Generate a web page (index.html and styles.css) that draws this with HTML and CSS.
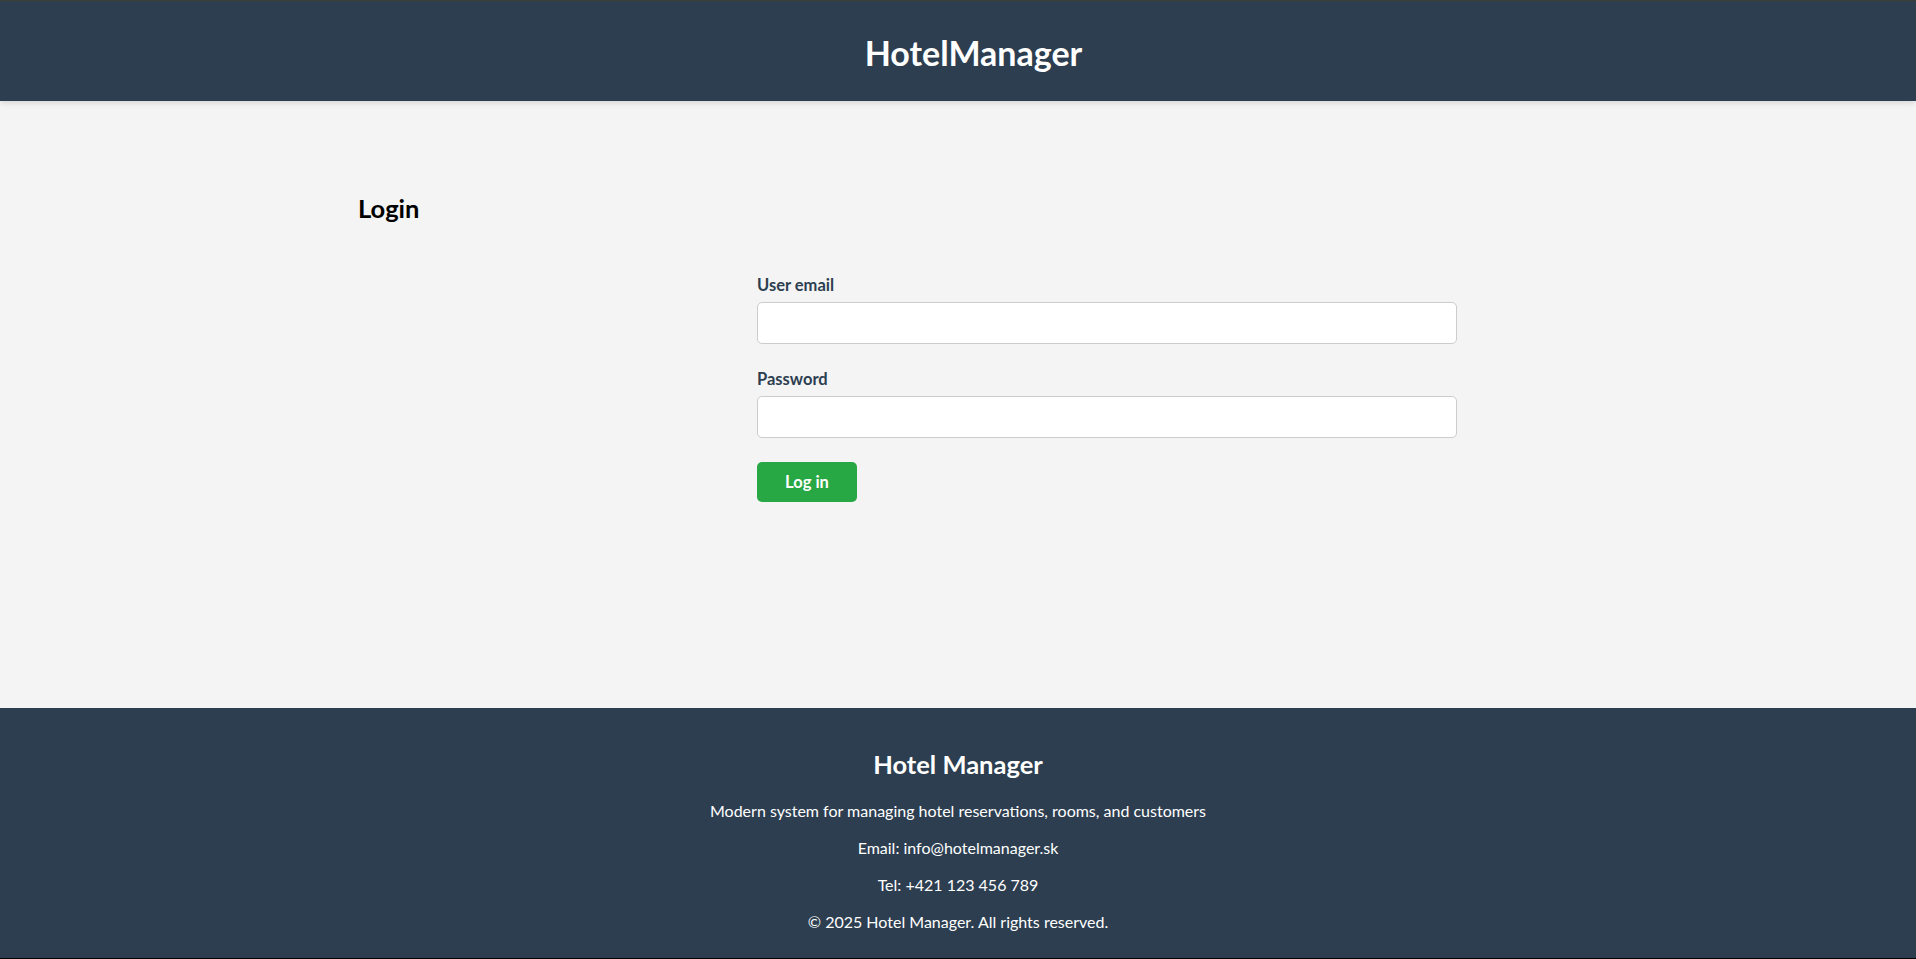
FILE: index.html
```html
<!DOCTYPE html>
<html lang="en">
<head>
<meta charset="utf-8">
<title>HotelManager - Login</title>
<link rel="stylesheet" href="styles.css">
</head>
<body>
<header class="site-header">
  <h1 class="brand">HotelManager</h1>
</header>
<main class="site-main">
  <div class="container">
    <h2 class="page-title">Login</h2>
    <form class="login-form">
      <div class="form-group">
        <label class="form-label" for="email">User email</label>
        <input class="form-input" id="email" type="email">
      </div>
      <div class="form-group">
        <label class="form-label" for="password">Password</label>
        <input class="form-input" id="password" type="password">
      </div>
      <button class="btn-login" type="button">Log in</button>
    </form>
  </div>
</main>
<footer class="site-footer">
  <h2 class="footer-title">Hotel Manager</h2>
  <p class="footer-text">Modern system for managing hotel reservations, rooms, and customers</p>
  <p class="footer-text">Email: info@hotelmanager.sk</p>
  <p class="footer-text">Tel: +421 123 456 789</p>
  <p class="footer-text">© 2025 Hotel Manager. All rights reserved.</p>
</footer>
</body>
</html>
```
FILE: styles.css
```css
* { box-sizing: border-box; }

html, body { height: 100%; }

body {
  margin: 0;
  font-family: Lato, "Noto Sans", sans-serif;
  font-size: 16px;
  background: #f4f4f4;
  color: #000;
  display: flex;
  flex-direction: column;
  min-height: 100vh;
}

.site-header {
  background: #2c3e50;
  border-top: 1px solid #3b3f35;
  padding: 32px 0 28px;
  box-shadow: 0 2px 6px rgba(0, 0, 0, 0.12);
  position: relative;
  z-index: 1;
}

.brand {
  margin: 0;
  padding-left: 31px;
  text-align: center;
  color: #fff;
  font-size: 34px;
  line-height: 40px;
  font-weight: 700;
}

.site-main {
  flex: 1;
}

.container {
  max-width: 1200px;
  margin: 0 auto;
  padding-top: 91px;
}

.page-title {
  margin: 0 0 51px;
  font-size: 25.5px;
  line-height: 32px;
  font-weight: 700;
}

.login-form {
  width: 700px;
  margin-left: 399px;
}

.form-group {
  margin-bottom: 24.5px;
}

.form-label {
  display: block;
  margin-bottom: 6px;
  font-weight: 700;
  font-size: 16.5px;
  line-height: 21px;
  color: #2c3e50;
}

.form-input {
  display: block;
  width: 100%;
  height: 42px;
  border: 1px solid #cccccc;
  border-radius: 5px;
  background: #fff;
  font: inherit;
  padding: 0 10px;
}

.btn-login {
  width: 100px;
  height: 40px;
  padding: 0;
  border: none;
  border-radius: 5px;
  background: #28a745;
  color: #fff;
  font-family: inherit;
  font-size: 16.5px;
  font-weight: 700;
  cursor: pointer;
}

.site-footer {
  background: #2c3e50;
  color: #fff;
  text-align: center;
  padding: 20px 20px 10px;
  border-bottom: 1px solid #000;
}

.footer-title {
  margin: 20px 0;
  font-size: 25.5px;
  line-height: 32px;
  font-weight: 700;
}

.footer-text {
  margin: 16px 0;
  font-size: 16px;
  line-height: 21px;
}
```
